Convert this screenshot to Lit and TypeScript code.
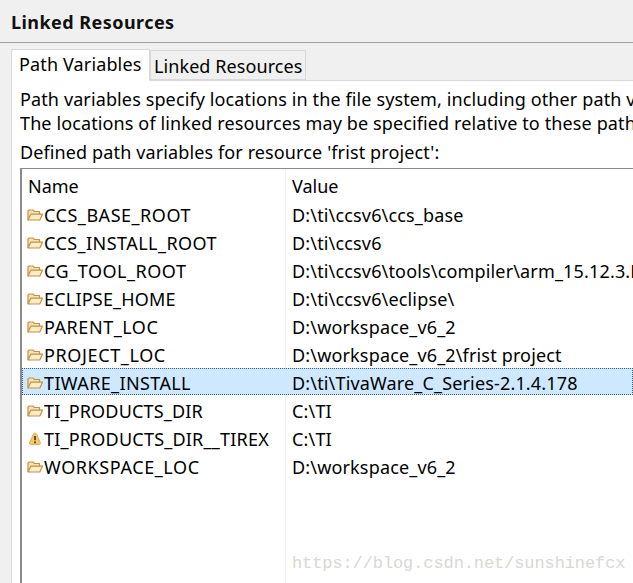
import { LitElement, html, css, svg } from "lit";
import { customElement } from "lit/decorators.js";

const rows: [string, string, number, string?][] = [
  ["CCS_BASE_ROOT", "D:\\ti\\ccsv6\\ccs_base", 0.53],
  ["CCS_INSTALL_ROOT", "D:\\ti\\ccsv6", 0.45],
  ["CG_TOOL_ROOT", "D:\\ti\\ccsv6\\tools\\compiler\\arm_15.12.3.LTS", 0.53],
  ["ECLIPSE_HOME", "D:\\ti\\ccsv6\\eclipse\\", 0.2],
  ["PARENT_LOC", "D:\\workspace_v6_2", 0.55],
  ["PROJECT_LOC", "D:\\workspace_v6_2\\frist project", 0.63],
  ["TIWARE_INSTALL", "D:\\ti\\TivaWare_C_Series-2.1.4.178", 0.38, "sel"],
  ["TI_PRODUCTS_DIR", "C:\\TI", 0.18],
  ["TI_PRODUCTS_DIR__TIREX", "C:\\TI", 0.22, "warn"],
  ["WORKSPACE_LOC", "D:\\workspace_v6_2", 0.6],
];

const folder = svg`<svg class="ic" width="16" height="16" viewBox="0 0 16 16">
  <path d="M1 13V4L2 3H6L7.5 4.5H12.5V7" fill="#f7e2ae" stroke="#c4904a" stroke-width="1.2"/>
  <path d="M1 13L3.8 7.2H15.5L12.8 13Z" fill="#fcedc6" stroke="#c4904a" stroke-width="1.2" stroke-linejoin="round"/>
</svg>`;

const warn = svg`<svg class="ic" width="16" height="16" viewBox="0 0 16 16">
  <path d="M8 2C9 2 9.3 2.6 9.8 3.6L13.2 11.2C13.8 12.8 13.2 13.5 12 13.5H4C2.8 13.5 2.2 12.8 2.8 11.2L6.2 3.6C6.7 2.6 7 2 8 2Z" fill="#f5c86a" stroke="#dcae66"/>
  <path d="M8 5V9.3M8 10.6V12.2" stroke="#4a3a20" stroke-width="1.7"/>
</svg>`;

@customElement("app-root")
export class AppRoot extends LitElement {
  static styles = css`
    :host {
      display: block;
      width: 633px;
      height: 583px;
      overflow: hidden;
      background: #f0f0f0;
      font-family: "Noto Sans", "Open Sans", sans-serif;
      font-size: 18px;
      color: #000;
      position: relative;
    }
    .title {
      box-sizing: border-box;
      border-bottom: 1px solid #a0a0a0;
      height: 43px;
      padding: 9px 0 0 11px;
      font-size: 18px;
      line-height: 27px;
      font-weight: 700;
      letter-spacing: 0.45px;
      white-space: nowrap;
      color: #111;
    }
    .tabs {
      display: flex;
      align-items: flex-end;
      margin: 6px 0 0 11px;
      height: 31px;
    }
    .tab {
      box-sizing: border-box;
      white-space: nowrap;
      letter-spacing: 0.14px;
    }
    .tab.on {
      width: 139px;
      height: 32px;
      margin-bottom: -1px;
      background: #fff;
      border: 1px solid #d9d9d9;
      border-bottom: none;
      padding: 1px 0 0 7px;
      line-height: 27px;
      position: relative;
    }
    .tab.off {
      width: 156px;
      height: 30px;
      background: #f0f0f0;
      border: 1px solid #d9d9d9;
      padding: 2px 0 0 3px;
      line-height: 26px;
      letter-spacing: 0.08px;
    }
    .panel {
      margin-left: 11px;
      background: #fff;
      border-left: 1px solid #d9d9d9;
      border-top: 1px solid #d9d9d9;
      padding: 6px 0 0 8px;
      height: 520px;
      overflow: hidden;
    }
    .line {
      white-space: nowrap;
      line-height: 24px;
      letter-spacing: 0.12px;
    }
    .line.gap {
      margin-top: 4px;
      margin-bottom: 3px;
      line-height: 26px;
    }
    .table {
      box-sizing: border-box;
      border: 1px solid #8a8a8f;
      border-left-width: 2px;
      border-right: none;
      border-bottom: none;
      height: 420px;
      position: relative;
    }
    .cols {
      display: grid;
      grid-template-columns: 263px 1fr;
    }
    .head {
      height: 31px;
      line-height: 34px;
    }
    .head > div:first-child { padding-left: 6px; }
    .head > div:last-child { padding-left: 7px; }
    .rule {
      position: absolute;
      left: 263px;
      top: 0;
      bottom: 0;
      width: 1px;
      background: #e9eff5;
    }
    .row {
      height: 28px;
      line-height: 30px;
      white-space: nowrap;
      box-sizing: border-box;
      position: relative;
    }
    .row.sel {
      background: #cde8ff;
      outline: 1px dotted #3a5a78;
      outline-offset: -1px;
      height: 27px;
      margin-bottom: 1px;
      z-index: 1;
    }
    .name {
      display: flex;
      align-items: center;
      padding-left: 5px;
      gap: 1px;
    }
    .ic { flex: none; margin-top: -1px; }
    .val { padding-left: 7px; overflow: hidden; letter-spacing: 0.16px; }
    .mark {
      position: absolute;
      left: 292px;
      top: 552px;
      font-family: "Liberation Mono", "DejaVu Sans Mono", monospace;
      font-size: 17px;
      letter-spacing: -0.1px;
      color: #d8d8d4;
      white-space: nowrap;
      line-height: 24px;
    }
  `;

  render() {
    return html`
      <div class="title">Linked Resources</div>
      <div class="tabs">
        <div class="tab on">Path Variables</div>
        <div class="tab off">Linked Resources</div>
      </div>
      <div class="panel">
        <div class="line">Path variables specify locations in the file system, including other path variables</div>
        <div class="line">The locations of linked resources may be specified relative to these path variables.</div>
        <div class="line gap">Defined path variables for resource 'frist project':</div>
        <div class="table">
          <div class="rule"></div>
          <div class="cols head"><div>Name</div><div>Value</div></div>
          ${rows.map(
            ([n, v, s, k]) => html`<div class="cols row ${k === "sel" ? "sel" : ""}">
              <div class="name">${k === "warn" ? warn : folder}<span style="letter-spacing:${s}px">${n}</span></div>
              <div class="val">${v}</div>
            </div>`
          )}
        </div>
      </div>
      <div class="mark">https://blog.csdn.net/sunshinefcx</div>
    `;
  }
}
